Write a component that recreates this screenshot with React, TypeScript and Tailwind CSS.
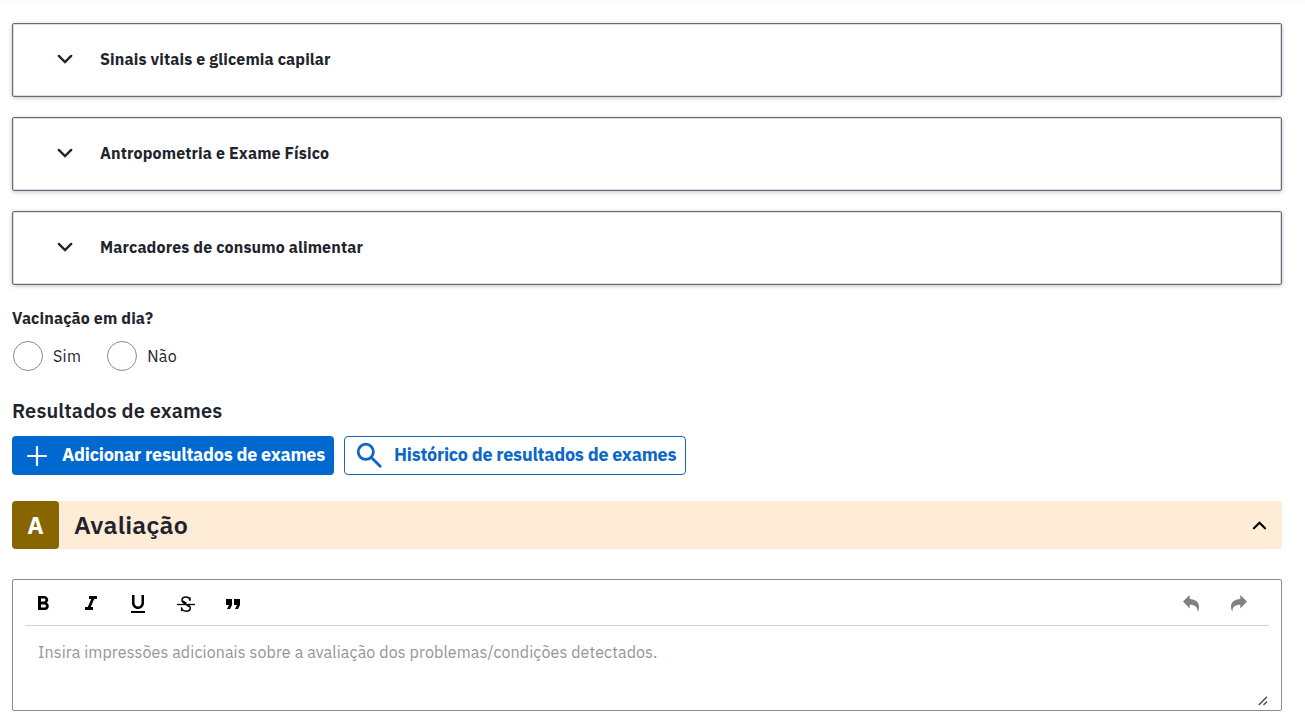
import React from "react";
import { MdFormatBold, MdFormatItalic, MdFormatUnderlined, MdFormatQuote } from "react-icons/md";

const sections = [
  "Sinais vitais e glicemia capilar",
  "Antropometria e Exame Físico",
  "Marcadores de consumo alimentar",
];

function Chevron({ up = false, className = "" }: { up?: boolean; className?: string }) {
  return (
    <svg viewBox="0 0 16 10" className={className} fill="none" stroke="currentColor" strokeWidth="2.4" strokeLinecap="round" strokeLinejoin="miter">
      <path d={up ? "M1.8 8 8 1.9 14.2 8" : "M1.8 1.9 8 8 14.2 1.9"} />
    </svg>
  );
}

function Accordion({ title }: { title: string }) {
  return (
    <button className="flex h-[74px] w-full items-center rounded-[2px] border border-[#696878] bg-white pb-[2px] pl-11 text-left shadow-[inset_0_0_0_1px_#dcdce2,0_1px_4px_rgba(40,40,60,0.28)]">
      <Chevron className="h-[10px] w-4 shrink-0" />
      <span className="ml-[27px] text-[16px] leading-6 font-bold tracking-[0.13px]">{title}</span>
    </button>
  );
}

function Radio({ label }: { label: string }) {
  return (
    <label className="flex items-center gap-[10px]">
      <span className="h-[30px] w-[30px] rounded-full border border-[#8b8b8b] bg-white" />
      <span className="text-[16px] tracking-[0.3px]">{label}</span>
    </label>
  );
}

function Strike() {
  return (
    <svg viewBox="0 0 18 16" className="h-4 w-[18px]" fill="none" stroke="currentColor">
      <path d="M0 8.500h18" strokeWidth="1.300" />
      <path d="M13 4.600C12.700 2 11.300 1 9 1 6.500 1 5 2.200 5 4.200c0 1.800 1.300 2.600 4 3.500" strokeWidth="1.500" />
      <path d="M13 1v3.600M4.400 15.200v-3.700" strokeWidth="1" />
      <path d="M9 8.500c3 .9 4.300 1.700 4.300 3.500 0 2.100-1.800 3.200-4.200 3.200-2.600 0-4.300-1.300-4.600-3.700" strokeWidth="1.500" />
      <path d="M5.900 5c.6 1.300 2 1.900 3.500 2.400M12.500 10.800c-.5-.8-1.500-1.300-2.500-1.700" strokeWidth="2" />
    </svg>
  );
}

function Arrow({ flip = false }: { flip?: boolean }) {
  return (
    <svg viewBox="0 0 16 17" className={flip ? "h-[17px] w-4 -scale-x-100" : "h-[17px] w-4"} fill="#808080">
      <path d="M0 6.500 6.700 0v3.900c6 .3 9.300 3.200 9.300 7.600 0 2.100-.5 3.800-1.500 5.400.3-4.600-2.400-7.100-7.800-7.100v3.600z" />
    </svg>
  );
}

export default function App() {
  return (
    <main className="h-[717px] overflow-hidden border-t-4 border-[#fcfcfc] bg-white pt-[19px] pr-[23px] pl-3 font-['IBM_Plex_Sans','Open_Sans',sans-serif] text-[#21242c]">
      <div className="flex flex-col gap-5">
        {sections.map((title) => (
          <Accordion key={title} title={title} />
        ))}
      </div>

      <h3 className="mt-[21px] text-[16px] leading-6 font-bold tracking-[0.13px]">Vacinação em dia?</h3>
      <div className="mt-[11px] ml-px flex h-[30px] gap-[26px]">
        <Radio label="Sim" />
        <Radio label="Não" />
      </div>

      <h2 className="mt-[26px] text-[20px] leading-7 font-semibold tracking-[0.12px]">Resultados de exames</h2>
      <div className="mt-[11px] flex gap-[10px]">
        <button className="flex h-[39px] w-[322px] items-center rounded bg-[#0069d0] pl-[15px] text-white">
          <svg viewBox="0 0 20 20" className="h-5 w-5 shrink-0" stroke="currentColor" strokeWidth="2.200" strokeLinecap="round">
            <path d="M10 1v18M1 10h18" />
          </svg>
          <span className="ml-[15px] pb-[2px] text-[18px] font-bold tracking-[-0.24px] whitespace-nowrap">Adicionar resultados de exames</span>
        </button>
        <button className="flex h-[39px] w-[342px] items-center rounded border border-[#1668b5] pb-[2px] pl-[11px] text-[#0b68c6]">
          <svg viewBox="0 0 26 26" className="h-[26px] w-[26px] shrink-0" fill="none" stroke="currentColor" strokeWidth="2.800" strokeLinecap="round">
            <circle cx="9.800" cy="9.800" r="7.600" />
            <path d="m15.400 15.400 8.800 8.800" />
          </svg>
          <span className="ml-3 text-[18px] font-bold tracking-[-0.24px] whitespace-nowrap">Histórico de resultados de exames</span>
        </button>
      </div>

      <section className="mt-[26px] flex h-12 items-center rounded bg-[#ffecd6]">
        <span className="flex h-12 w-[47px] items-center justify-center rounded bg-[#876600] text-[24px] font-bold text-white">A</span>
        <h1 className="ml-[15px] text-[25px] font-semibold tracking-[0.22px]">Avaliação</h1>
        <Chevron up className="mr-[15px] ml-auto h-[9px] w-[15px] text-black" />
      </section>

      <section className="mt-[30px] flex h-[132px] flex-col rounded-[2px] border border-[#8b8b8b] px-3">
        <div className="flex h-[46px] items-center border-b border-[#d4d4d4] pt-[2px] text-black">
          <div className="flex items-center gap-[23.600px] pl-[6px]">
            <span className="flex w-6 justify-center"><MdFormatBold className="h-6 w-6" /></span>
            <span className="flex w-6 justify-center"><MdFormatItalic className="h-6 w-6" /></span>
            <span className="flex w-6 justify-center"><MdFormatUnderlined className="h-6 w-6" /></span>
            <span className="flex w-6 items-center justify-center"><Strike /></span>
            <span className="flex w-6 justify-center"><MdFormatQuote className="h-6 w-6" /></span>
          </div>
          <div className="mr-[22px] ml-auto flex gap-8">
            <Arrow />
            <Arrow flip />
          </div>
        </div>
        <p className="mt-[14px] pl-[13px] text-[16px] leading-6 tracking-[0.12px] text-[#91969c]">
          Insira impressões adicionais sobre a avaliação dos problemas/condições detectados.
        </p>
        <svg viewBox="0 0 10 10" className="mt-auto mr-px mb-1 ml-auto h-[10px] w-[10px]" stroke="#4a4a4a" strokeWidth="1.400">
          <path d="M.8 9 9 .8M5.500 9 9 5.500" />
        </svg>
      </section>
    </main>
  );
}
